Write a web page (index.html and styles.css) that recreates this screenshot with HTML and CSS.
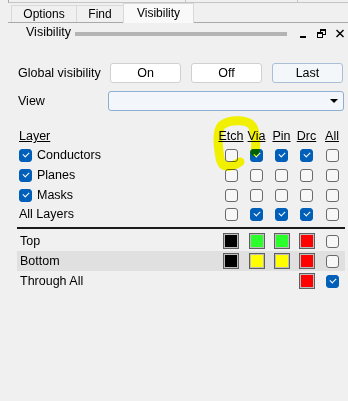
FILE: index.html
```html
<!DOCTYPE html>
<html lang="en">
  <head>
    <meta charset="UTF-8" />
    <title>Visibility</title>
    <link rel="stylesheet" href="styles.css">
  </head>
  <body>
    <div class="topstrip"><span class="seg1"></span><span class="seg2"></span></div>
    <div class="tabs">
      <div class="tab options">Options</div>
      <div class="tab find">Find</div>
      <div class="tab active">Visibility</div>
    </div>
    <div class="titlebar">
      <span class="title">Visibility</span>
      <span class="grip"></span>
      <span class="winbtns">
        <svg width="8" height="9" viewBox="0 0 8 9"><rect x="1" y="7" width="6" height="2" fill="#000"/></svg>
        <svg width="9" height="9" viewBox="0 0 9 9" fill="none" stroke="#000">
          <rect x="3.5" y="0.5" width="5" height="5" stroke-width="1"/>
          <line x1="3.5" y1="1.5" x2="8.5" y2="1.5"/>
          <rect x="0.5" y="3.5" width="5" height="5" fill="#f0f0f0"/>
          <line x1="0.5" y1="4.5" x2="5.5" y2="4.5"/>
        </svg>
        <svg width="8" height="9" viewBox="0 0 8 9" stroke="#000" stroke-width="1.4">
          <line x1="0.5" y1="1" x2="7.5" y2="8"/>
          <line x1="7.5" y1="1" x2="0.5" y2="8"/>
        </svg>
      </span>
    </div>

    <div class="panel">
      <div class="row global">
        <span class="label">Global visibility</span>
        <button>On</button>
        <button>Off</button>
        <button class="last">Last</button>
      </div>
      <div class="row view">
        <span class="label">View</span>
        <div class="select"><span class="arrow"></span></div>
      </div>

      <div class="layers">
        <div class="lrow head">
          <span class="name u">Layer</span>
          <span class="u">Etch</span>
          <span class="u">Via</span>
          <span class="u">Pin</span>
          <span class="u">Drc</span>
          <span class="u">All</span>
        </div>
        <div class="lrow">
          <span class="name"><span class="cb on"></span>Conductors</span>
          <span class="cb"></span>
          <span class="cb on"></span>
          <span class="cb on"></span>
          <span class="cb on"></span>
          <span class="cb"></span>
        </div>
        <div class="lrow">
          <span class="name"><span class="cb on"></span>Planes</span>
          <span class="cb"></span>
          <span class="cb"></span>
          <span class="cb"></span>
          <span class="cb"></span>
          <span class="cb"></span>
        </div>
        <div class="lrow">
          <span class="name"><span class="cb on"></span>Masks</span>
          <span class="cb"></span>
          <span class="cb"></span>
          <span class="cb"></span>
          <span class="cb"></span>
          <span class="cb"></span>
        </div>
        <div class="lrow short">
          <span class="name">All Layers</span>
          <span class="cb"></span>
          <span class="cb on"></span>
          <span class="cb on"></span>
          <span class="cb on"></span>
          <span class="cb"></span>
        </div>
      </div>

      <div class="subclass">
        <div class="lrow">
          <span class="name">Top</span>
          <span class="sw black"></span>
          <span class="sw green"></span>
          <span class="sw green"></span>
          <span class="sw red"></span>
          <span class="cb"></span>
        </div>
        <div class="lrow shaded">
          <span class="name">Bottom</span>
          <span class="sw black"></span>
          <span class="sw yellow"></span>
          <span class="sw yellow"></span>
          <span class="sw red"></span>
          <span class="cb"></span>
        </div>
        <div class="lrow">
          <span class="name">Through All</span>
          <span></span>
          <span></span>
          <span></span>
          <span class="sw red"></span>
          <span class="cb on"></span>
        </div>
      </div>
    </div>

    <!-- hand drawn highlight over the Etch column -->
    <svg class="marker" width="348" height="401" viewBox="0 0 348 401">
      <path d="M 240 162 C 232 167, 222 170, 220 158 C 218 146, 216 131, 222 125 C 230 119, 249 119, 253 127 C 256 134, 256 145, 255 152"
        fill="none" stroke="#ffff00" stroke-width="9" stroke-linecap="round" stroke-linejoin="round"/>
    </svg>
  </body>
</html>
```

FILE: styles.css
```css
body {
  margin: 0;
  width: 348px;
  height: 401px;
  overflow: hidden;
  position: relative;
  background-color: #f0f0f0;
  color: #000000;
  font-family: "Liberation Sans", Arial, sans-serif;
  font-size: 12.5px;
}
.topstrip {
  height: 3px;
  margin-left: 8px;
  border-left: 1px solid #a8a8a8;
  border-bottom: 1px solid #c4c4c4;
  box-sizing: border-box;
  display: flex;
}
.topstrip span {
  border-right: 1px solid #c4c4c4;
}
.seg1 {
  width: 176px;
}
.seg2 {
  width: 111px;
}
.tabs {
  display: flex;
  align-items: flex-end;
  height: 20px;
  margin-left: 8px;
  padding-left: 3px;
  border-bottom: 1px solid #a9a9a9;
  box-sizing: border-box;
}
.tab {
  height: 17px;
  line-height: 16px;
  text-align: center;
  border: 1px solid #d9d9d9;
  border-bottom: none;
  border-right: none;
  box-sizing: border-box;
  font-size: 12px;
}
.tab.options {
  width: 65px;
}
.tab.find {
  width: 47px;
}
.tab.active {
  width: 71px;
  height: 20px;
  line-height: 18px;
  margin-bottom: -1px;
  background-color: #f9f9f9;
  border-right: 1px solid #d9d9d9;
}
.titlebar {
  display: flex;
  align-items: center;
  height: 18px;
  padding: 0 4px 0 26px;
}
.grip {
  flex: 1;
  height: 4px;
  margin: 3px 0 0 4px;
  background-color: #b4b4b4;
}
.winbtns {
  display: flex;
  align-items: center;
  gap: 10px;
  margin-left: 12px;
  padding-top: 2px;
}
.winbtns svg {
  display: block;
}
.panel {
  padding: 0 3px 0 17px;
}
.row {
  display: flex;
  align-items: center;
  height: 20px;
}
.global {
  margin-top: 22px;
  gap: 10px;
}
.global .label {
  width: 92px;
  padding-left: 1px;
  margin-right: -10px;
}
button {
  width: 71px;
  height: 20px;
  padding: 0;
  background-color: #ffffff;
  border: 1px solid #d0d0d0;
  border-radius: 3px;
  font-family: inherit;
  font-size: 12.5px;
  color: #000000;
}
button.last {
  background-color: #f4f7fa;
  border-color: #a9bfd8;
}
.view {
  margin-top: 8px;
  padding-right: 1px;
}
.view .label {
  width: 90px;
  padding-left: 1px;
}
.select {
  flex: 1;
  height: 20px;
  box-sizing: border-box;
  border: 1px solid #8eaed2;
  border-radius: 3px;
  background-color: #f3f6fa;
  display: flex;
  align-items: center;
  justify-content: flex-end;
  padding-right: 5px;
}
.arrow {
  width: 0;
  height: 0;
  border-left: 4px solid transparent;
  border-right: 4px solid transparent;
  border-top: 4px solid #000000;
}
.layers {
  margin-top: 16px;
}
.lrow {
  display: grid;
  grid-template-columns: 1fr 26px 25px 25px 25px 26px;
  align-items: center;
  justify-items: center;
  height: 20px;
}
.lrow .name {
  justify-self: start;
  display: flex;
  align-items: center;
  gap: 5px;
  padding-left: 2px;
}
.lrow.head {
  height: 18px;
}
.lrow.short {
  height: 18px;
}
.u {
  text-decoration: underline;
}
.subclass {
  margin-top: 4px;
  padding-top: 2px;
  border-top: 2px solid #1a1a1a;
}
.subclass .name {
  padding-left: 3px;
}
.shaded {
  background-color: #e0e0e0;
}
.cb {
  width: 13px;
  height: 13px;
  box-sizing: border-box;
  border: 1px solid #6a6a6a;
  border-radius: 3px;
  background-color: #f7f7f7;
  position: relative;
}
.cb.on {
  background-color: #005fb8;
  border-color: #005fb8;
}
.cb.on::after {
  content: "";
  position: absolute;
  left: 3px;
  top: 2px;
  width: 5px;
  height: 3px;
  border-left: 1px solid #ffffff;
  border-bottom: 1px solid #ffffff;
  transform: rotate(-45deg);
}
.sw {
  width: 16px;
  height: 16px;
  box-sizing: border-box;
  border: 1px solid #5f5f5f;
  box-shadow: inset 0 0 0 1px #bdbdbd;
}
.sw.black {
  background-color: #000000;
}
.sw.green {
  background-color: #2bff2b;
}
.sw.yellow {
  background-color: #ffff00;
}
.sw.red {
  background-color: #ff0000;
}
.marker {
  position: absolute;
  left: 0;
  top: 0;
  pointer-events: none;
  mix-blend-mode: multiply;
}
```
